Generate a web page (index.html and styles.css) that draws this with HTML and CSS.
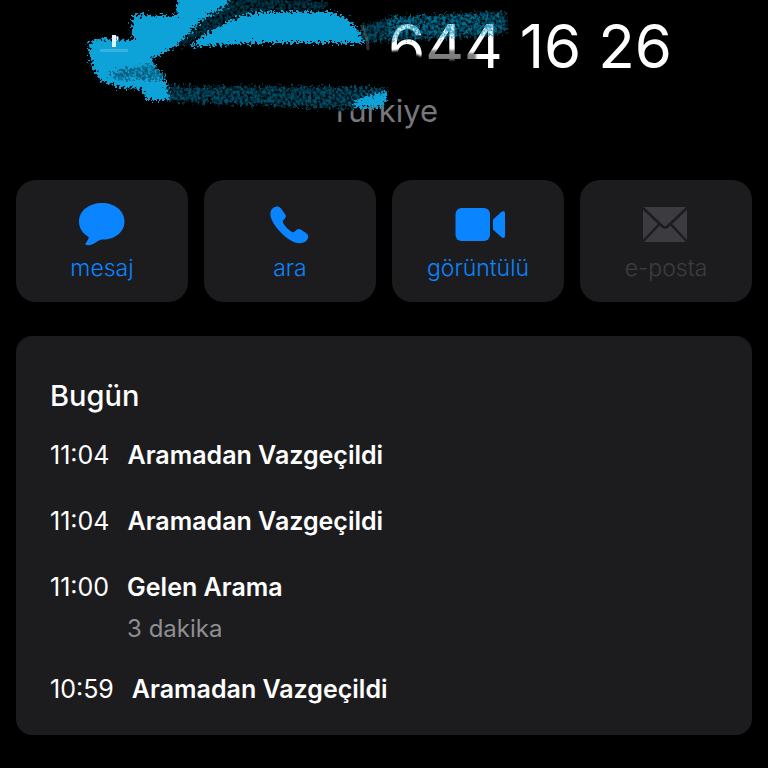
FILE: index.html
```html
<!DOCTYPE html>
<html lang="tr">
<head>
<meta charset="utf-8">
<meta name="viewport" content="width=device-width, initial-scale=1">
<title>Kişi</title>
<link rel="stylesheet" href="styles.css">
</head>
<body>
<main class="page">
  <header class="contact">
    <h1 class="number"><span>+</span><span>644 16 26</span></h1>
    <p class="country">Türkiye</p>
    <svg class="marker" viewBox="0 0 768 140" aria-hidden="true">
      <defs>
        <filter id="rough" x="-5%" y="-20%" width="110%" height="140%">
          <feTurbulence type="fractalNoise" baseFrequency="0.4" numOctaves="2" seed="4" result="n"/>
          <feDisplacementMap in="SourceGraphic" in2="n" scale="13" xChannelSelector="R" yChannelSelector="G"/>
          <feGaussianBlur stdDeviation="0.7"/>
        </filter>
        <filter id="grain" x="-5%" y="-20%" width="110%" height="140%">
          <feTurbulence type="fractalNoise" baseFrequency="0.35" numOctaves="3" seed="9" result="n"/>
          <feColorMatrix in="n" type="matrix" values="0 0 0 0 0  0 0 0 0 0  0 0 0 0 0  0 0 0 2.5 -0.6" result="m"/>
          <feDisplacementMap in="SourceGraphic" in2="n" scale="13" xChannelSelector="R" yChannelSelector="G" result="d"/>
          <feComposite in="d" in2="m" operator="in"/>
          <feGaussianBlur stdDeviation="0.6"/>
        </filter>
        <filter id="soft" x="-10%" y="-20%" width="120%" height="140%">
          <feGaussianBlur stdDeviation="1.2"/>
        </filter>
      </defs>
      <g fill="#000" filter="url(#soft)">
        <path d="M150 62L240 42H371V52L392 51L404 50L418 55L430 60L464 60L468 74L440 80L385 84H150Z"/>
        <path d="M320 84H390L384 104L352 110V111H330Z"/>
        <path d="M426 50H464V64H426ZM464 53H476V62H464Z" opacity=".5"/>
      </g>
      <g filter="url(#grain)">
        <path fill="#07789f" fill-opacity=".65" d="M162 86L384 87L386 92L350 109L270 106L166 101Z"/>
        <path fill="#067098" fill-opacity=".5" d="M222 4L236 -4L330 2L322 11L256 11L205 34L180 48L176 40Z"/>
        <path fill="#0783ae" fill-opacity=".6" d="M362 25L392 17L504 11L508 30L490 36L362 42Z"/>
        <path fill="#0892c2" fill-opacity=".45" d="M386 17L500 14L504 32L460 35L390 35Z"/>
      </g>
      <g filter="url(#rough)">
        <path fill="#07a2d8" d="M88 44L94 39L133 40L132 15L176 16L178 -8L236 -8L226 6L206 17L192 30L176 46L152 59L156 68L164 74L170 100H146L143 89L122 88L102 82L92 68Z"/>
        <path fill="#07a2d8" d="M188 47L202 36L220 26L240 16L260 12L332 12L346 18L357 28L364 43L300 43L250 43Z"/>
        <path fill="#07a2d8" d="M351 107L360 98L374 95L387 90L384 107L366 108Z"/>
      </g>
      <g filter="url(#grain)">
        <path fill="#000" fill-opacity=".45" d="M108 73L150 64L163 70L165 80L120 80Z"/>
      </g>
      <path fill="#dff6fc" d="M112 35h4v12h-4z"/>
      <path fill="#8ad5ee" d="M100 49h28v3h-28z" opacity=".35"/>
      <path fill="none" stroke="#888" stroke-width="3" stroke-opacity=".35" d="M361 25Q368 35 368 50"/>
    </svg>
  </header>

  <nav class="actions">
    <button class="action" type="button">
      <svg class="icon" viewBox="0 0 52 44" aria-hidden="true"><path fill="currentColor" d="M26 1C39 1 48.500 9 48.500 19.500C48.500 30 39 37.500 27 37.500C23 37.500 21 40 17 42C14 43.500 11 43.500 9.500 42.500C8.500 41.500 12.500 39 12.700 35C6.500 31.500 3 26 3 19.500C3 9 13 1 26 1Z"/></svg>
      <span class="label">mesaj</span>
    </button>
    <button class="action" type="button">
      <svg class="icon" viewBox="0 0 52 44" aria-hidden="true"><path fill="currentColor" d="M8 7C10.500 4 14.500 3.500 17 6.500L21.500 12.700C22.500 14.500 21.500 16 19.800 17.700C18.700 18.900 18.500 19.700 19.200 20.900C21 24.300 24.500 27.800 28 29.900C29.200 30.600 30 30.300 31 29.300C33 27.200 35 26.500 37 27.700L42 31.100C44.800 33.300 45 36 42.500 38.500C38.800 42.500 32.500 42 26 38C19.500 34 13.800 28.300 10 22C6.300 15.800 5 10.500 8 7Z"/></svg>
      <span class="label">ara</span>
    </button>
    <button class="action" type="button">
      <svg class="icon" viewBox="0 0 52 44" aria-hidden="true"><rect x="3.500" y="6" width="34.500" height="33" rx="6" fill="currentColor"/><path fill="currentColor" d="M41 17.500L49.500 9.800C51 8.700 53 9 53 11V34C53 36 51 36.500 49.500 35.300L41 27.500Z"/></svg>
      <span class="label">görüntülü</span>
    </button>
    <button class="action" type="button" disabled>
      <svg class="icon" viewBox="0 0 52 44" aria-hidden="true"><rect x="3" y="5" width="44" height="35" rx="2" fill="currentColor"/><path fill="none" stroke="#1c1c1e" stroke-width="2.500" d="M3 6L22 24Q25 27 28 24L47 6M3 39.500L19.500 22M47 39.500L30.500 22"/></svg>
      <span class="label">e-posta</span>
    </button>
  </nav>

  <section class="history">
    <h2 class="day">Bugün</h2>
    <ul class="calls">
      <li class="call"><time class="time">11:04</time><div><p class="kind">Aramadan Vazgeçildi</p></div></li>
      <li class="call"><time class="time">11:04</time><div><p class="kind">Aramadan Vazgeçildi</p></div></li>
      <li class="call"><time class="time">11:00</time><div><p class="kind">Gelen Arama</p><p class="duration">3 dakika</p></div></li>
      <li class="call"><time class="time">10:59</time><div><p class="kind">Aramadan Vazgeçildi</p></div></li>
    </ul>
  </section>
</main>
</body>
</html>
```

FILE: styles.css
```css
* { box-sizing: border-box; }
body {
  margin: 0;
  background: #000;
  color: #fff;
  font-family: Inter, "Liberation Sans", sans-serif;
}
h1, h2, p, ul { margin: 0; padding: 0; font-weight: 400; }
.page { padding: 0 16px 32px; }
.contact {
  position: relative;
  padding: 10px 80px 44px;
}
.number {
  display: flex;
  justify-content: space-between;
  font-size: 60px;
  line-height: 72px;
}
.country {
  padding-top: 4px;
  font-size: 31px;
  line-height: 50px;
  color: #77777b;
  text-align: center;
}
.marker {
  position: absolute;
  top: 0;
  left: -16px;
  width: calc(100% + 32px);
  overflow: hidden;
}
.actions {
  display: grid;
  grid-template-columns: repeat(4, 1fr);
  gap: 16px;
}
.action {
  display: flex;
  flex-direction: column;
  align-items: center;
  gap: 7px;
  padding: 22px 0 19px;
  border: 0;
  border-radius: 20px;
  background: #1c1c1e;
  color: #0a84ff;
  font: inherit;
}
.action:disabled { color: #3c3c40; }
.icon { width: 52px; height: 44px; overflow: visible; }
.label { font-size: 23px; line-height: 30px; font-weight: 300; }
.history {
  margin-top: 34px;
  padding: 40px 34px 22px;
  border-radius: 16px;
  background: #1c1c1e;
}
.day {
  font-size: 29px;
  line-height: 40px;
  font-weight: 500;
}
.calls {
  display: flex;
  flex-direction: column;
  gap: 18px;
  margin-top: 15px;
  list-style: none;
}
.call {
  display: flex;
  gap: 18px;
  font-size: 25px;
  line-height: 48px;
}
.time { font-weight: 400; }
.kind { font-weight: 600; }
.duration { font-size: 24px; line-height: 36px; color: #8e8e93; }
```
